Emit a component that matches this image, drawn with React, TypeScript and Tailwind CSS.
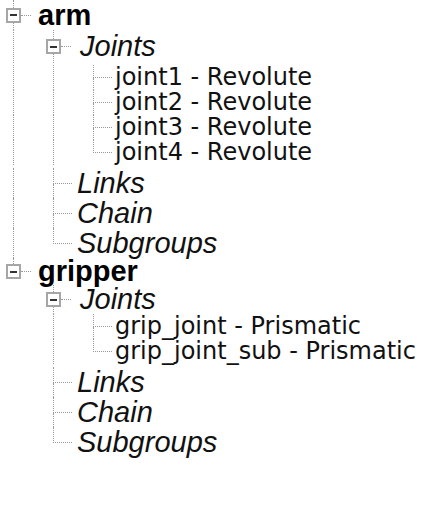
import { Fragment } from 'react'

type Kind = 'group' | 'section' | 'joint'

interface TreeNode {
  label: string
  kind: Kind
  h?: string
  pad?: string
  children?: TreeNode[]
}

const tree: TreeNode[] = [
  {
    label: 'arm',
    kind: 'group',
    h: 'h-[30px]',
    children: [
      {
        label: 'Joints',
        kind: 'section',
        h: 'h-[33px]',
        pad: 'pt-[2px] pb-[3px]',
        children: [
          { label: 'joint1 - Revolute', kind: 'joint' },
          { label: 'joint2 - Revolute', kind: 'joint' },
          { label: 'joint3 - Revolute', kind: 'joint' },
          { label: 'joint4 - Revolute', kind: 'joint' },
        ],
      },
      { label: 'Links', kind: 'section' },
      { label: 'Chain', kind: 'section' },
      { label: 'Subgroups', kind: 'section' },
    ],
  },
  {
    label: 'gripper',
    kind: 'group',
    h: 'h-[27px]',
    children: [
      {
        label: 'Joints',
        kind: 'section',
        h: 'h-[29px]',
        pad: 'pb-[3px]',
        children: [
          { label: 'grip_joint - Prismatic', kind: 'joint' },
          { label: 'grip_joint_sub - Prismatic', kind: 'joint' },
        ],
      },
      { label: 'Links', kind: 'section' },
      { label: 'Chain', kind: 'section' },
      { label: 'Subgroups', kind: 'section' },
    ],
  },
]

const rowHeight: Record<Kind, string> = {
  group: 'h-[30px]',
  section: 'h-[30px]',
  joint: 'h-[25px]',
}

const labelStyle: Record<Kind, string> = {
  group: "font-['Liberation_Sans',Arial,sans-serif] font-bold text-[29px] leading-none text-black",
  section: "ml-[2px] font-['Liberation_Sans',Arial,sans-serif] italic text-[29px] leading-none text-[#111]",
  joint: "font-['DejaVu_Sans',Verdana,sans-serif] text-[24px] leading-[25px] text-[#111]",
}

const dots = 'border-dotted border-[#9a9a9a]'

function Guide({ on }: { on: boolean }) {
  return (
    <div className="flex w-[40px] shrink-0 self-stretch">
      <div className="ml-[13px] flex w-0 flex-col">
        {on && <div className={`flex-1 border-l ${dots}`} />}
      </div>
    </div>
  )
}

function Row({
  node,
  guides,
  hasAbove,
  hasBelow,
}: {
  node: TreeNode
  guides: boolean[]
  hasAbove: boolean
  hasBelow: boolean
}) {
  const expandable = !!node.children
  return (
    <div className={`flex items-center ${node.h ?? rowHeight[node.kind]}`}>
      {guides.map((g, i) => (
        <Guide key={i} on={g} />
      ))}
      {expandable ? (
        <div className="flex w-[38px] shrink-0 items-center self-stretch">
          <div className="ml-[6px] flex w-[15px] flex-col items-center self-stretch">
            <div className={`w-0 flex-1 ${hasAbove ? `border-l ${dots}` : ''}`} />
            <div className="flex h-[15px] w-[15px] shrink-0 items-center justify-center border-2 border-[#a6a6a6] bg-white">
              <div className="h-[2px] w-[7px] bg-[#333]" />
            </div>
            <div className={`w-0 flex-1 ${hasBelow ? `border-l ${dots}` : ''}`} />
          </div>
          <div className={`w-[10px] border-t ${dots}`} />
        </div>
      ) : (
        <div className="flex w-[35px] shrink-0 self-stretch">
          <div className="ml-[13px] flex w-[19px] flex-col">
            <div className={`flex-1 border-b border-l ${dots}`} />
            <div className={`flex-1 ${hasBelow ? `border-l ${dots}` : ''}`} />
          </div>
        </div>
      )}
      <span className={`whitespace-nowrap ${labelStyle[node.kind]}`}>{node.label}</span>
    </div>
  )
}

function Branch({ nodes, guides, rootAbove }: { nodes: TreeNode[]; guides: boolean[]; rootAbove?: boolean }) {
  return (
    <>
      {nodes.map((node, i) => {
        const last = i === nodes.length - 1
        const hasAbove = i > 0 || !!rootAbove || guides.length > 0
        return (
          <Fragment key={node.label + i}>
            <Row node={node} guides={guides} hasAbove={hasAbove} hasBelow={!last} />
            {node.children && (
              <div className={`flex flex-col ${node.pad ?? ''}`}>
                <Branch nodes={node.children} guides={[...guides, !last]} />
              </div>
            )}
          </Fragment>
        )
      })}
    </>
  )
}

export default function App() {
  return (
    <div className="h-[513px] w-[427px] overflow-hidden bg-white">
      <div className="flex flex-col">
        <Branch nodes={tree} guides={[]} rootAbove />
      </div>
    </div>
  )
}
